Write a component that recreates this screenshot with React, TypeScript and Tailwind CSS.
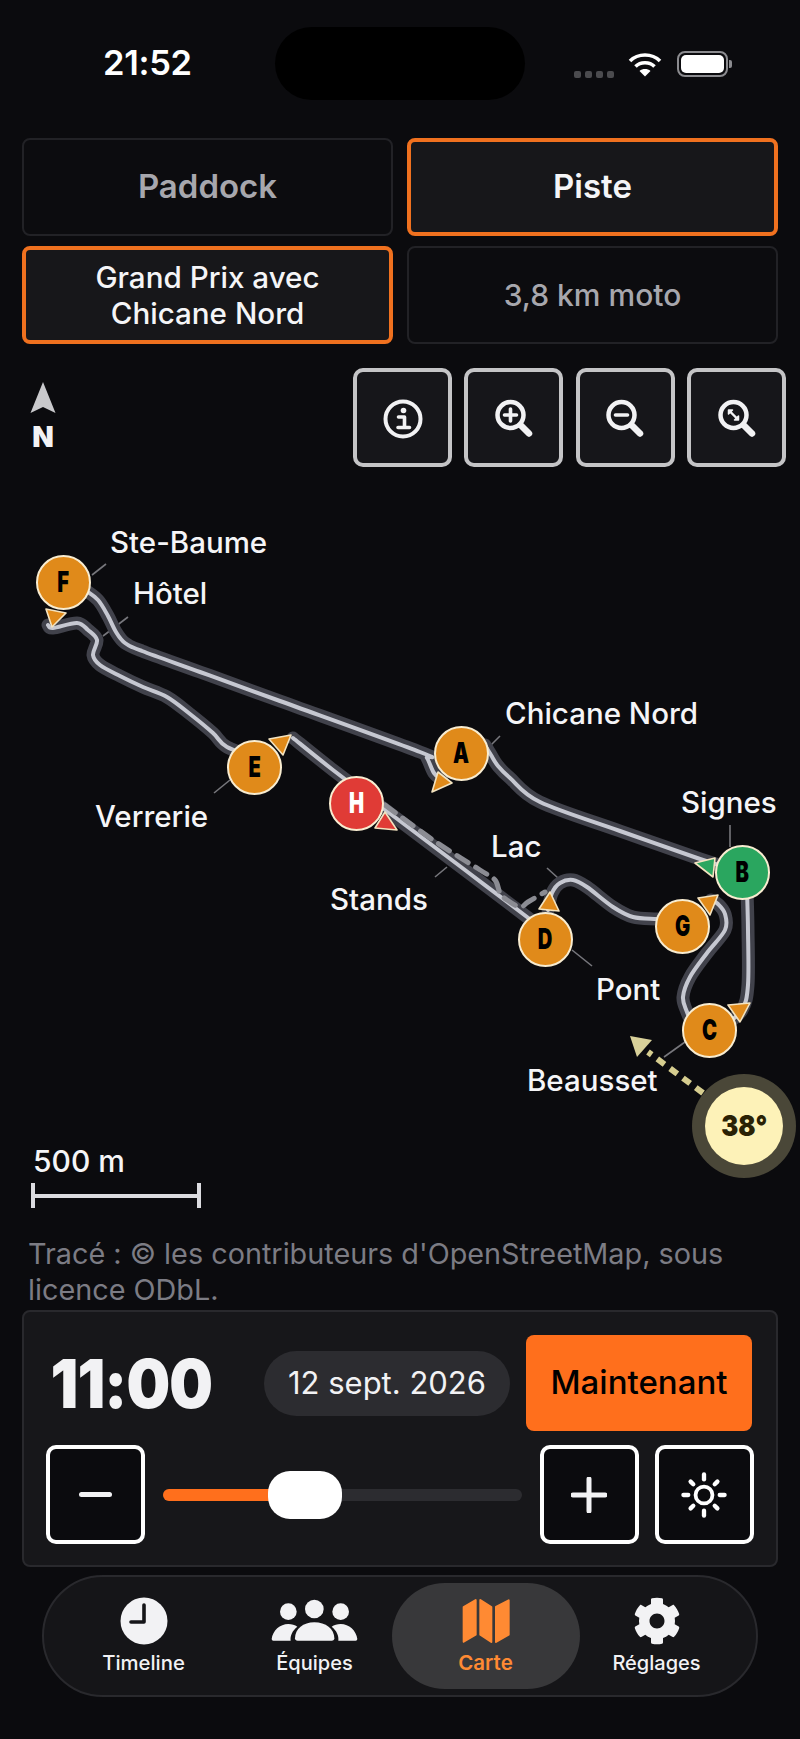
import { FaCog } from "react-icons/fa";

type Pt = [number, number];

// page coords of the map top, everything on the map is measured from the page
const MAP_TOP = 467;

function smooth(pts: Pt[]) {
    let d = `M${pts[0][0]} ${pts[0][1]}`;
    for (let i = 0; i < pts.length - 1; i++) {
        const p0 = pts[i - 1] ?? pts[i];
        const p1 = pts[i];
        const p2 = pts[i + 1];
        const p3 = pts[i + 2] ?? p2;
        const c1x = p1[0] + (p2[0] - p0[0]) / 6;
        const c1y = p1[1] + (p2[1] - p0[1]) / 6;
        const c2x = p2[0] - (p3[0] - p1[0]) / 6;
        const c2y = p2[1] - (p3[1] - p1[1]) / 6;
        d += ` C${c1x} ${c1y} ${c2x} ${c2y} ${p2[0]} ${p2[1]}`;
    }
    return d;
}

// one list per stretch between two markers, the joins are hidden under the markers
const sectors: Pt[][] = [
    [[75, 580], [84, 589], [98, 600], [108, 616], [116, 632], [125, 643], [142, 651], [200, 672], [280, 701], [420, 752], [427, 758], [434, 773], [442, 780]],
    [[485, 745], [491, 755], [498, 766], [510, 778], [540, 802], [620, 831], [700, 859], [735, 870]],
    [[747, 890], [748, 930], [748, 985], [742, 1010], [725, 1025]],
    [[695, 1030], [687, 1012], [683, 997], [690, 977], [707, 953], [725, 930], [725, 914], [718, 904], [711, 900]],
    [[675, 920], [657, 919], [633, 917], [613, 907], [587, 887], [573, 880], [560, 883], [552, 893], [548, 910]],
    [[540, 928], [527, 917], [465, 870], [400, 821], [333, 770], [293, 738]],
    [[262, 760], [227, 747], [213, 733], [190, 714], [167, 697], [143, 687], [120, 676], [100, 665], [93, 655], [97, 640], [88, 630], [77, 623], [53, 628], [48, 625]],
];

const dashed: Pt[] = [[385, 805], [433, 840], [480, 870], [495, 880], [500, 893], [507, 900], [520, 907], [528, 902], [545, 892]];

const leaders = [
    [92, 575, 106, 564], [103, 636, 128, 617], [214, 793, 230, 780], [435, 877, 447, 867], [488, 748, 500, 736],
    [730, 825, 730, 847], [547, 868, 558, 878], [572, 950, 592, 966], [685, 1042, 664, 1057],
];

const arrows = [
    { pts: "46,609 66,613 52,627", fill: "#e08a1a" },
    { pts: "269,739 291,735 283,755", fill: "#e08a1a" },
    { pts: "385,812 397,830 375,828", fill: "#e03b36" },
    { pts: "438,772 452,783 432,792", fill: "#e08a1a" },
    { pts: "715,858 713,877 695,863", fill: "#2aa65f" },
    { pts: "698,898 718,895 710,915", fill: "#e08a1a" },
    { pts: "550,892 559,911 539,909", fill: "#e08a1a" },
    { pts: "728,1005 750,1003 740,1022", fill: "#e08a1a" },
];

const markers = [
    { l: "F", x: 63.5, y: 582, c: "bg-[#e08a1a] text-black" },
    { l: "E", x: 254.5, y: 767, c: "bg-[#e08a1a] text-black" },
    { l: "H", x: 356.5, y: 803, c: "bg-[#e03b36] text-white" },
    { l: "A", x: 461.5, y: 753, c: "bg-[#e08a1a] text-black" },
    { l: "B", x: 742, y: 872, c: "bg-[#2aa65f] text-black" },
    { l: "G", x: 682.5, y: 926, c: "bg-[#e08a1a] text-black" },
    { l: "D", x: 545.5, y: 939, c: "bg-[#e08a1a] text-black" },
    { l: "C", x: 709.5, y: 1030, c: "bg-[#e08a1a] text-black" },
];

const labels = [
    { t: "Ste-Baume", x: 110, y: 543 },
    { t: "Hôtel", x: 133, y: 594 },
    { t: "Chicane Nord", x: 505, y: 714 },
    { t: "Signes", x: 681, y: 803 },
    { t: "Lac", x: 491, y: 847 },
    { t: "Stands", x: 330, y: 900 },
    { t: "Verrerie", x: 95, y: 817 },
    { t: "Pont", x: 596, y: 990 },
    { t: "Beausset", x: 527, y: 1081 },
];

function Magnifier({ children }: { children?: React.ReactNode }) {
    return (
        <svg width="48" height="48" viewBox="0 0 48 48" fill="none" stroke="#f2f2f4" strokeLinecap="round">
            <circle cx="20.5" cy="21" r="13" strokeWidth="4.5" />
            <path d="M31 31.5 L39 39.5" strokeWidth="6.5" />
            {children}
        </svg>
    );
}

function ToolButton({ children }: { children: React.ReactNode }) {
    return (
        <button className="flex h-[99px] w-[99px] items-center justify-center rounded-[10px] border-4 border-[#c4c4c6] bg-[#16161a]">
            {children}
        </button>
    );
}

function SunIcon() {
    const rays = [0, 45, 90, 135, 180, 225, 270, 315];
    return (
        <svg width="52" height="52" viewBox="0 0 48 48" fill="none" stroke="#ffffff" strokeLinecap="round">
            <circle cx="24" cy="24" r="7.8" strokeWidth="3.5" />
            {rays.map((r) => (
                <path key={r} d={r % 90 === 0 ? "M24 5 L24 9.5" : "M24 6.5 L24 10"} strokeWidth="4" transform={`rotate(${r} 24 24)`} />
            ))}
        </svg>
    );
}

export default function App() {
    return (
        <div className="min-h-[1739px] w-[800px] overflow-hidden bg-[#0b0b0e] font-['Inter',sans-serif] text-white">
            {/* status bar */}
            <div className="flex items-center pb-[38px] pt-[27px]">
                <div className="w-[275px] pl-[103px] text-[34.5px] font-semibold leading-none tracking-[-0.3px]">21:52</div>
                <div className="h-[73px] w-[250px] rounded-[37px] bg-black" />
                <div className="flex w-[275px] items-center pl-[49px]">
                    <div className="mt-[21px] flex gap-[4px]">
                        <span className="h-[7px] w-[7px] rounded-[2px] bg-[#4b4b4e]" />
                        <span className="h-[7px] w-[7px] rounded-[2px] bg-[#4b4b4e]" />
                        <span className="h-[7px] w-[7px] rounded-[2px] bg-[#4b4b4e]" />
                        <span className="h-[7px] w-[7px] rounded-[2px] bg-[#4b4b4e]" />
                    </div>
                    <svg className="ml-[13px]" width="36" height="26" viewBox="0 0 34 26" fill="none" stroke="#fff" strokeWidth="3.6">
                        <path d="M2 10 C10 2 24 2 32 10" />
                        <path d="M7.5 15.5 C12.5 10.5 21.5 10.5 26.5 15.5" />
                        <path d="M17 25.5 L11.5 20 C14.5 17.4 19.5 17.4 22.5 20 Z" fill="#fff" stroke="none" />
                    </svg>
                    <div className="ml-[14px] flex items-center">
                        <div className="h-[26px] w-[51px] rounded-[8px] border-2 border-[#8b8b8f] p-[2px]">
                            <div className="h-full w-full rounded-[5px] bg-white" />
                        </div>
                        <div className="ml-[1px] h-[8px] w-[3px] rounded-r-[2px] bg-[#8b8b8f]" />
                    </div>
                </div>
            </div>

            {/* site / layout selectors */}
            <div className="grid grid-cols-2 gap-x-[14px] gap-y-[10px] px-[22px]">
                <button className="flex h-[98px] items-center justify-center rounded-[8px] border-2 border-[#222226] bg-[#0c0c0f] text-[33px] font-semibold text-[#a7a7ad]">
                    Paddock
                </button>
                <button className="flex h-[98px] items-center justify-center rounded-[8px] border-4 border-[#f0711f] bg-[#17171a] text-[33px] font-semibold text-[#f5f5f7]">
                    Piste
                </button>
                <button className="flex h-[98px] items-center justify-center rounded-[8px] border-4 border-[#f0711f] bg-[#17171a] text-center text-[29.6px] font-medium leading-[36px] text-[#f5f5f7]">
                    Grand Prix avec
                    <br />
                    Chicane Nord
                </button>
                <button className="flex h-[98px] items-center justify-center rounded-[8px] border-2 border-[#222226] bg-[#0c0c0f] text-[30px] font-medium text-[#a7a7ad]">
                    3,8 km moto
                </button>
            </div>

            {/* north + map tools */}
            <div className="mt-[24px] flex h-[99px] justify-between pl-[30px] pr-[14px]">
                <div className="flex w-[26px] flex-col items-center pt-[14px]">
                    <svg width="26" height="32" viewBox="0 0 26 32" fill="#c9c9cc">
                        <path d="M13 0 L25.5 31 L13 25 L0.5 31 Z" />
                    </svg>
                    <span className="mt-[6px] text-[28px] font-black leading-[34px] text-[#f2f2f4]">N</span>
                </div>
                <div className="flex gap-[12.3px]">
                    <ToolButton>
                        <svg width="48" height="48" viewBox="0 0 48 48" fill="none" stroke="#f2f2f4">
                            <circle cx="24" cy="25" r="17.5" strokeWidth="4" />
                            <circle cx="24.5" cy="16.5" r="2.8" fill="#f2f2f4" stroke="none" />
                            <path d="M19.5 23 H25.5 V33 M19 33.5 H30.5" strokeWidth="3.6" strokeLinecap="round" strokeLinejoin="round" />
                        </svg>
                    </ToolButton>
                    <ToolButton>
                        <Magnifier>
                            <path d="M14.5 21 H26.5 M20.5 15 V27" strokeWidth="3.6" />
                        </Magnifier>
                    </ToolButton>
                    <ToolButton>
                        <Magnifier>
                            <path d="M14.5 21 H26.5" strokeWidth="3.6" />
                        </Magnifier>
                    </ToolButton>
                    <ToolButton>
                        <Magnifier>
                            <path d="M17 17.5 L24 24.5" strokeWidth="2.4" />
                            <path d="M15.5 20 V16 H19.5 Z M25.5 22 V26 H21.5 Z" fill="#f2f2f4" strokeWidth="1.5" strokeLinejoin="round" />
                        </Magnifier>
                    </ToolButton>
                </div>
            </div>

            {/* track map */}
            <div className="relative h-[678px]">
                <svg className="absolute inset-0 overflow-visible" width="800" height="678" viewBox={`0 ${MAP_TOP} 800 678`} fill="none">
                    {leaders.map((l, i) => (
                        <line key={i} x1={l[0]} y1={l[1]} x2={l[2]} y2={l[3]} stroke="#77777c" strokeWidth="1.6" />
                    ))}
                    {sectors.map((s, i) => (
                        <path key={i} d={smooth(s)} stroke="#41424b" strokeWidth="13" strokeLinejoin="round" strokeLinecap="round" />
                    ))}
                    {sectors.map((s, i) => (
                        <path key={i} d={smooth(s)} stroke="#c6c8d1" strokeWidth="4" strokeLinejoin="round" strokeLinecap="round" />
                    ))}
                    <path d={smooth(dashed)} stroke="#8b8c93" strokeWidth="5" strokeDasharray="13 9" strokeLinecap="round" />
                    <line x1="703" y1="1093" x2="648" y2="1052" stroke="#d6cd8f" strokeWidth="6" strokeDasharray="9 7" />
                    <polygon points="630,1036 652,1040 637,1057" fill="#d9d19a" />
                </svg>

                {markers.map((m) => (
                    <div
                        key={m.l}
                        className={`absolute flex h-[55px] w-[55px] items-center justify-center rounded-full border-2 border-[#f8ecd0] ${m.c}`}
                        style={{ left: m.x - 27.5, top: m.y - MAP_TOP - 27.5 }}
                    >
                        <span className="scale-x-[0.72] text-[28px] font-black leading-none">{m.l}</span>
                    </div>
                ))}

                <svg className="absolute inset-0 overflow-visible" width="800" height="678" viewBox={`0 ${MAP_TOP} 800 678`}>
                    {arrows.map((a, i) => (
                        <polygon key={i} points={a.pts} fill={a.fill} stroke="#f3e3c0" strokeWidth="1.6" strokeLinejoin="round" />
                    ))}
                </svg>

                {labels.map((l) => (
                    <span
                        key={l.t}
                        className="absolute -translate-y-1/2 whitespace-nowrap text-[29.5px] font-medium leading-none text-[#f5f5f7]"
                        style={{ left: l.x, top: l.y - MAP_TOP }}
                    >
                        {l.t}
                    </span>
                ))}

                {/* wind badge */}
                <div className="absolute left-[692px] top-[607px] flex h-[104px] w-[104px] items-center justify-center rounded-full bg-[#4a4738]">
                    <div className="flex h-[78px] w-[78px] items-center justify-center rounded-full bg-[#fdf2b8]">
                        <span className="scale-x-[0.88] text-[29px] font-black text-[#2a2205]">38°</span>
                    </div>
                </div>
            </div>

            {/* scale */}
            <div className="pl-[31px]">
                <div className="pl-[2px] text-[30px] font-medium leading-[32px] text-[#f5f5f7]">500 m</div>
                <div className="mt-[6px] flex h-[25px] w-[170px] items-center border-x-4 border-[#dcdce0]">
                    <div className="h-[4px] w-full bg-[#dcdce0]" />
                </div>
            </div>
            <p className="mt-[28px] px-[28px] text-[28.8px] font-normal leading-[36px] text-[#7c7c84]">
                Tracé : © les contributeurs d'OpenStreetMap, sous licence ODbL.
            </p>

            {/* time control card */}
            <div className="mx-[22px] mt-[2px] h-[257px] rounded-[8px] border-2 border-[#29292d] bg-[#17171a] pl-[22px] pr-[23px] pt-[23px]">
                <div className="flex h-[96px] items-center">
                    <div className="w-[218px] origin-left scale-x-[0.905] pl-[5px] text-[68px] font-black leading-none tracking-[-1px] text-[#f2f2f4]">11:00</div>
                    <div className="flex h-[65px] w-[246px] items-center justify-center rounded-full bg-[#2c2c30] text-[31px] font-normal text-[#f2f2f4]">
                        12 sept. 2026
                    </div>
                    <button className="ml-[16px] h-[96px] w-[226px] rounded-[8px] bg-[#ff6f1c] text-[33px] font-medium text-black">
                        Maintenant
                    </button>
                </div>
                <div className="-mr-[0.5px] mt-[14px] flex items-center">
                    <button className="flex h-[99px] w-[99px] items-center justify-center rounded-[10px] border-4 border-white bg-[#0b0b0e]">
                        <span className="h-[5px] w-[33px] rounded-full bg-[#f2f2f4]" />
                    </button>
                    <div className="relative mx-[18px] flex h-[48px] flex-1 items-center">
                        <div className="h-[12px] w-full overflow-hidden rounded-full bg-[#2c2c30]">
                            <div className="h-full w-[115px] bg-[#ff6f1c]" />
                        </div>
                        <div className="absolute left-[105px] top-0 h-[48px] w-[74px] rounded-[22px] bg-white" />
                    </div>
                    <button className="flex h-[99px] w-[99px] items-center justify-center rounded-[10px] border-4 border-white bg-[#0b0b0e]">
                        <svg width="36" height="36" viewBox="0 0 36 36" stroke="#f2f2f4" strokeWidth="5" strokeLinecap="round">
                            <path d="M2 18 H34 M18 2 V34" />
                        </svg>
                    </button>
                    <button className="ml-[16px] flex h-[99px] w-[99px] items-center justify-center rounded-[10px] border-4 border-white bg-[#0b0b0e]">
                        <SunIcon />
                    </button>
                </div>
            </div>

            {/* bottom nav */}
            <nav className="mx-[42px] mt-[8px] flex h-[122px] items-center rounded-[61px] border-2 border-[#29292d] bg-[#151518] px-[14px]">
                <div className="flex h-[106px] w-[171px] flex-col items-center pt-[14px]">
                    <svg width="48" height="48" viewBox="0 0 48 48">
                        <circle cx="24" cy="24" r="23.5" fill="#f2f2f4" />
                        <path d="M24 8 V25 H11" fill="none" stroke="#151518" strokeWidth="3.6" strokeLinecap="round" strokeLinejoin="round" />
                    </svg>
                    <span className="mt-[6px] text-[20.3px] font-medium leading-[24px] text-[#f2f2f4]">Timeline</span>
                </div>
                <div className="flex h-[106px] w-[171px] flex-col items-center pt-[14px]">
                    <svg className="-my-[1px]" width="90" height="50" viewBox="630 21 270 150" fill="#f2f2f4">
                        <circle cx="685" cy="68" r="25" />
                        <circle cx="763" cy="60" r="28" />
                        <circle cx="842" cy="68" r="25" />
                        <path d="M705 148 C705 120 730 100 763 100 C797 100 823 120 823 148 Q823 155 815 155 H713 Q705 155 705 148 Z" />
                        <path d="M635 150 C638 125 660 105 685 105 C695 105 705 108 712 113 C697 125 690 140 692 155 H640 Q635 155 635 150 Z" />
                        <path d="M892 150 C889 125 867 105 842 105 C832 105 822 108 815 113 C830 125 837 140 835 155 H887 Q892 155 892 150 Z" />
                    </svg>
                    <span className="mt-[6px] text-[20px] font-medium leading-[24px] text-[#f2f2f4]">Équipes</span>
                </div>
                <div className="-mx-[8.5px] flex h-[106px] w-[188px] flex-col items-center rounded-[53px] bg-[#38383a] pt-[14px]">
                    <svg width="50" height="48" viewBox="62 22 150 144" fill="#ff8a33" stroke="#ff8a33" strokeWidth="6" strokeLinejoin="round">
                        <path d="M70 52 L106 31 V135 L70 156 Z" />
                        <path d="M120 31 L153 52 V157 L120 135 Z" />
                        <path d="M167 52 L205 32 V135 L167 157 Z" />
                    </svg>
                    <span className="mt-[6px] text-[20.5px] font-semibold leading-[24px] text-[#ff8a33]">Carte</span>
                </div>
                <div className="flex h-[106px] w-[171px] flex-col items-center pt-[14px]">
                    <FaCog size={48} color="#f2f2f4" />
                    <span className="mt-[6px] text-[20px] font-medium leading-[24px] text-[#f2f2f4]">Réglages</span>
                </div>
            </nav>
        </div>
    );
}
